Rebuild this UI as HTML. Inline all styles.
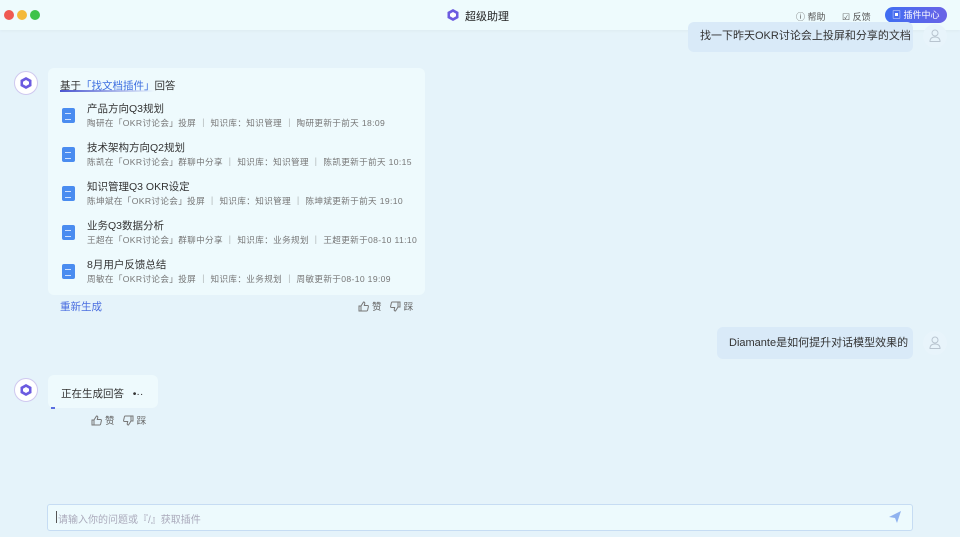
<!DOCTYPE html>
<html><head><meta charset="utf-8"><style>
*{margin:0;padding:0;box-sizing:border-box}
body{width:960px;height:537px;overflow:hidden;background:#e5f3fa;font-family:"Liberation Sans","Noto Sans CJK SC",sans-serif;position:relative;color:#333}
.abs{position:absolute}
.hdr{left:0;top:0;width:960px;height:30px;background:#eefbfd;box-shadow:0 1px 3px rgba(0,0,0,.04)}
.dot{width:10px;height:10px;border-radius:50%;top:10px}
.logo{width:24px;height:24px;border-radius:50%;background:#fff;border:1.5px solid #cfc8ef}
.card{background:#eefafd;border-radius:6px}
.t{font-size:10.5px;color:#333;white-space:nowrap}
.s{font-size:8.6px;color:#777;white-space:nowrap;letter-spacing:.35px}
.ic{width:13px;height:15px;border-radius:2px;background:#4a8cf0}
.ic:after{content:"";position:absolute;left:3px;top:5px;width:6px;height:5px;border-top:1px solid #cfe0ff;border-bottom:1px solid #cfe0ff}
.ub{background:#d9eaf8;border-radius:6px;font-size:10.5px;color:#333}
.av{width:24px;height:24px;border-radius:50%;background:#e8f4fb}
.fb{font-size:9.5px;color:#666;white-space:nowrap;display:flex;align-items:center;gap:3px}
</style></head><body>
<div class="abs hdr"></div>
<div class="abs dot" style="left:4px;background:#ef5a52"></div>
<div class="abs dot" style="left:17px;background:#f4b93b"></div>
<div class="abs dot" style="left:30px;background:#3fc34a"></div>
<svg class="abs" style="left:446px;top:8px" width="14" height="14" viewBox="0 0 14 14"><polygon points="7,1 12.5,4 12.5,10 7,13 1.5,10 1.5,4" fill="#6b5be0"/><polygon points="7,4 10,5.7 10,8.3 7,10 4,8.3 4,5.7" fill="#fff"/></svg>
<div class="abs t" style="left:465px;top:8px;font-size:11px;color:#222">超级助理</div>
<div class="abs s" style="left:796px;top:10px;font-size:9px;color:#555;letter-spacing:0">ⓘ 帮助</div>
<div class="abs s" style="left:842px;top:10px;font-size:9px;color:#555;letter-spacing:0">☑ 反馈</div>
<div class="abs" style="left:885px;top:7px;width:62px;height:16px;border-radius:8px;background:linear-gradient(90deg,#3f6ef2,#6a63e6);color:#fff;font-size:9px;line-height:16px;padding-left:7px">▣ 插件中心</div>

<div class="abs ub" style="left:688px;top:22px;width:225px;height:30px;line-height:28px;padding-left:12px;font-size:11px">找一下昨天OKR讨论会上投屏和分享的文档</div>
<div class="abs av" style="left:923px;top:24px"></div>
<svg class="abs" style="left:929px;top:29px" width="12" height="13" viewBox="0 0 12 13" fill="none" stroke="#b8c4cf" stroke-width="1"><circle cx="6" cy="4" r="3"/><path d="M1 12.5 Q1 8 6 8 Q11 8 11 12.5 Z"/></svg>

<div class="abs logo" style="left:14px;top:71px"></div>
<svg class="abs" style="left:19px;top:76px" width="14" height="14" viewBox="0 0 14 14"><polygon points="7,1 12.5,4 12.5,10 7,13 1.5,10 1.5,4" fill="#6b5be0"/><polygon points="7,4 10,5.7 10,8.3 7,10 4,8.3 4,5.7" fill="#fff"/></svg>
<div class="abs card" style="left:48px;top:68px;width:377px;height:227px"></div>
<div class="abs t" style="left:60px;top:78px">基于<span style="color:#3d6fe0">「找文档插件」</span>回答</div>
<div class="abs" style="left:60px;top:90px;width:95px;height:2px;background:linear-gradient(90deg,#4a55d0,rgba(74,85,208,0))"></div>

<div class="abs ic" style="left:62px;top:108px"></div>
<div class="abs t" style="left:87px;top:101px">产品方向Q3规划</div>
<div class="abs s" style="left:87px;top:117px">陶研在「OKR讨论会」投屏 ｜ 知识库：知识管理 ｜ 陶研更新于前天 18:09</div>
<div class="abs ic" style="left:62px;top:147px"></div>
<div class="abs t" style="left:87px;top:140px">技术架构方向Q2规划</div>
<div class="abs s" style="left:87px;top:156px">陈凯在「OKR讨论会」群聊中分享 ｜ 知识库：知识管理 ｜ 陈凯更新于前天 10:15</div>
<div class="abs ic" style="left:62px;top:186px"></div>
<div class="abs t" style="left:87px;top:179px">知识管理Q3 OKR设定</div>
<div class="abs s" style="left:87px;top:195px">陈坤斌在「OKR讨论会」投屏 ｜ 知识库：知识管理 ｜ 陈坤斌更新于前天 19:10</div>
<div class="abs ic" style="left:62px;top:225px"></div>
<div class="abs t" style="left:87px;top:218px">业务Q3数据分析</div>
<div class="abs s" style="left:87px;top:234px">王超在「OKR讨论会」群聊中分享 ｜ 知识库：业务规划 ｜ 王超更新于08-10 11:10</div>
<div class="abs ic" style="left:62px;top:264px"></div>
<div class="abs t" style="left:87px;top:257px">8月用户反馈总结</div>
<div class="abs s" style="left:87px;top:273px">周敏在「OKR讨论会」投屏 ｜ 知识库：业务规划 ｜ 周敏更新于08-10 19:09</div>

<div class="abs t" style="left:60px;top:299px;color:#4a6ee0">重新生成</div>
<div class="abs fb" style="left:358px;top:299px">
<svg width="11" height="11" viewBox="0 0 11 11" fill="none" stroke="#777" stroke-width="1"><path d="M1 5h2v5H1zM3 5l2.5-4c1 0 1.5.6 1.2 1.8L6.3 4.5H9.5c.7 0 1 .5.9 1.1l-.8 3.6c-.1.5-.5.8-1 .8H3"/></svg>赞&nbsp;&nbsp;
<svg width="11" height="11" viewBox="0 0 11 11" fill="none" stroke="#777" stroke-width="1"><path d="M10 6H8V1h2zM8 6l-2.5 4c-1 0-1.5-.6-1.2-1.8L4.7 6.5H1.5C.8 6.5.5 6 .6 5.4l.8-3.6c.1-.5.5-.8 1-.8H8"/></svg>踩</div>

<div class="abs ub" style="left:717px;top:327px;width:196px;height:32px;line-height:32px;padding-left:12px;font-size:11px">Diamante是如何提升对话模型效果的</div>
<div class="abs av" style="left:923px;top:331px"></div>
<svg class="abs" style="left:929px;top:336px" width="12" height="13" viewBox="0 0 12 13" fill="none" stroke="#b8c4cf" stroke-width="1"><circle cx="6" cy="4" r="3"/><path d="M1 12.5 Q1 8 6 8 Q11 8 11 12.5 Z"/></svg>

<div class="abs logo" style="left:14px;top:378px"></div>
<svg class="abs" style="left:19px;top:383px" width="14" height="14" viewBox="0 0 14 14"><polygon points="7,1 12.5,4 12.5,10 7,13 1.5,10 1.5,4" fill="#6b5be0"/><polygon points="7,4 10,5.7 10,8.3 7,10 4,8.3 4,5.7" fill="#fff"/></svg>
<div class="abs card" style="left:48px;top:375px;width:110px;height:33px"></div>
<div class="abs t" style="left:61px;top:386px">正在生成回答 &nbsp;&nbsp;•··</div>
<div class="abs" style="left:51px;top:407px;width:4px;height:2px;background:#5a6ee0"></div>
<div class="abs fb" style="left:91px;top:413px">
<svg width="11" height="11" viewBox="0 0 11 11" fill="none" stroke="#777" stroke-width="1"><path d="M1 5h2v5H1zM3 5l2.5-4c1 0 1.5.6 1.2 1.8L6.3 4.5H9.5c.7 0 1 .5.9 1.1l-.8 3.6c-.1.5-.5.8-1 .8H3"/></svg>赞&nbsp;&nbsp;
<svg width="11" height="11" viewBox="0 0 11 11" fill="none" stroke="#777" stroke-width="1"><path d="M10 6H8V1h2zM8 6l-2.5 4c-1 0-1.5-.6-1.2-1.8L4.7 6.5H1.5C.8 6.5.5 6 .6 5.4l.8-3.6c.1-.5.5-.8 1-.8H8"/></svg>踩</div>

<div class="abs" style="left:47px;top:504px;width:866px;height:27px;background:#edfafd;border:1px solid #c6dcf3;border-radius:3px"></div>
<div class="abs" style="left:56px;top:511px;width:1px;height:12px;background:#555"></div>
<div class="abs s" style="left:58px;top:511px;color:#aab;font-size:10px;letter-spacing:0">请输入你的问题或『/』获取插件</div>
<svg class="abs" style="left:888px;top:510px" width="14" height="14" viewBox="0 0 14 14"><path d="M1 7 L13 1 L9 13 L7 8 Z" fill="#8fb2ef"/></svg>
</body></html>
